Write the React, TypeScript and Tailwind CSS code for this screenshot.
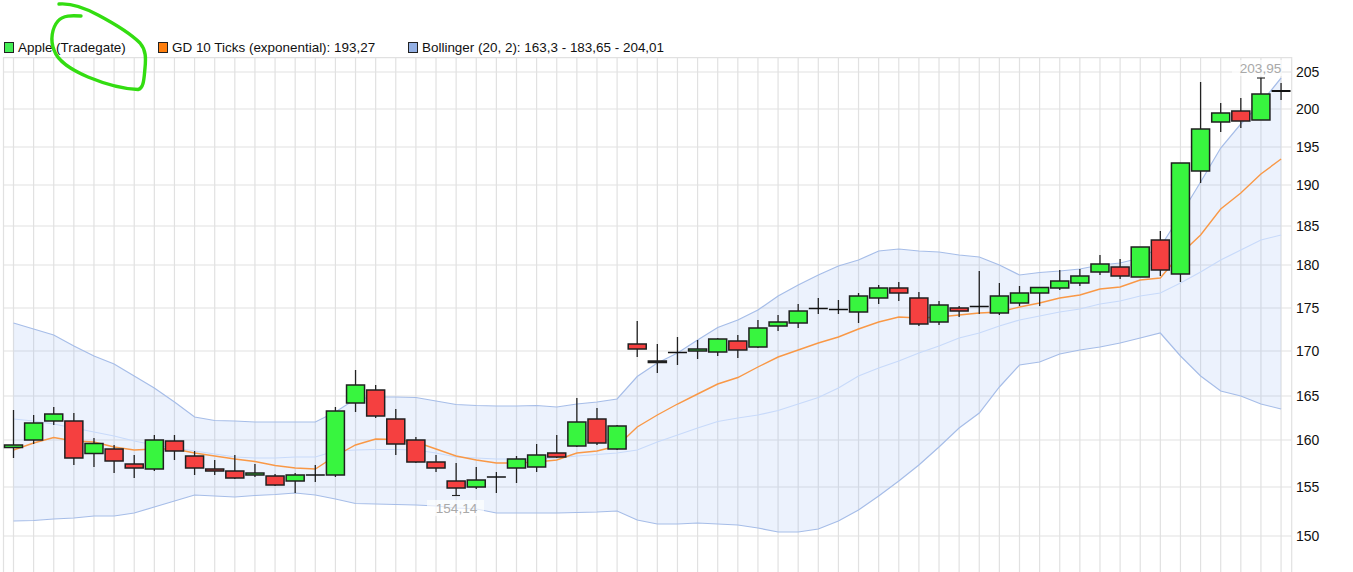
const upper = [323,329,335,346,356,364,376,388,402,417,420.5,421,422,422,422,422,412,399,397,397,397.5,401,404.5,405.5,406,406,405.5,407,404,402,399,376.5,363,353,340,327.5,320,310,296,285,275,266,260,251,249,251,252,255,257,265,275,272.5,271,269,265,263,258,247,215,182,148,124,103,78];
const lower = [521,520.5,519,518,516,516,513,507,501,495,496,497,495.5,494.5,493,495,499,503.5,504,504.5,505,506,508,509,513,513,513,513,512.5,512,511,520,524,524,523,524,525,528,532,532,529,521,510,496,481,465,447,428,413,387,365,362,354,350,347,343,338,333,356,376,391,396,404,409];
const middle = [419,421,424,428,432,436,441,445,448,451,454,457,458,458,457,457,451,450,449.5,449.5,450,453,457,458,459,459,459,458,456,454.5,453,450,442,435,428,421.5,418,415,410.5,404,397.5,388,376,368,361,353,346,338,333,326,320,316,312,309,304,301,296,293,283,272,260,250,240,235];
const orange = [450,443,437.5,441,442,447,450,449,449,453,456,459,461.5,465.5,468,469,456,445,439,439.5,442,449,456,460,463,463,462,460,453,451,446,427,415,404,394,384,377.5,367,357,350,343,337,329,322,317,318,317,315,313,312,307,303,298,295,289,287,280,278,254,235,209,193,174,159];

type C = [number, number, number, number, "g" | "r" | "d"];
const candles: C[] = [
  [410,458,445,447.5,"g"],[415,444,423,440,"g"],[407,425,414,421,"g"],[413,465,421,458,"r"],
  [438,467,443.5,453.5,"g"],[445,473,449,461,"r"],[455,478,464,468,"r"],[435,471,440,469,"g"],
  [435,460,441,451,"r"],[451,475,456,468,"r"],[460,475,469,471,"r"],[455,479,471,478,"r"],
  [464,477,473,475,"g"],[474,486,476,485,"r"],[473,493,475,481,"g"],[465,482,475,475,"d"],
  [407,477,411,475,"g"],[370,412,385,403,"g"],[385,418,390,416,"r"],[409,455,419,444,"r"],
  [437,463,440,462,"r"],[455,472,462,468,"r"],[463,495,481,488,"r"],[467,489,480,487,"g"],
  [472,493,477,477,"d"],[456,483,459,468,"g"],[444,472,455,467,"g"],[435,458,453,457,"r"],
  [398,447,422,446,"g"],[408,445,419,443,"r"],[425,450,426,449,"g"],[321,357,344,349,"r"],
  [344,373,361,362.5,"g"],[337,365,352.5,352.5,"d"],[340,359,349,351,"g"],[338,356,339,352,"g"],
  [335,358,341,350,"r"],[320,348,328,347,"g"],[315,331,322,326,"g"],[304,328,311,323,"g"],
  [298,314,308.5,308.5,"d"],[300,314,309.5,309.5,"d"],[293,323,296,312,"g"],[285,304,288,298,"g"],
  [282,301,288,293,"r"],[292,326,298,324,"r"],[301,325,305,322,"g"],[306,317,308,311,"r"],
  [271,314,306.5,306.5,"d"],[283,315,296,313,"g"],[286,306,293,303,"g"],[287,306,287.5,293,"g"],
  [270,290,281,288,"g"],[269,286,276,283,"g"],[255,275,264,272,"g"],[259,279,267,276,"r"],
  [247,277,247,277,"g"],[231,276,240,270,"r"],[163,282,163,274,"g"],[82,183,129,171,"g"],
  [103,132,113,122,"g"],[98,128,111,121,"r"],[78,120,94,120,"g"],[83,100,91,91,"d"],
];

const X = (i: number) => 13.5 + 20.12 * i;
const pts = (a: number[]) => a.map((y, i) => `${X(i).toFixed(1)},${y}`).join(" ");
const band = `${pts(upper)} ${lower.map((y, i) => `${X(i).toFixed(1)},${y}`).reverse().join(" ")}`;
const yTicks: [number, string][] = [[72,"205"],[109,"200"],[147,"195"],[185,"190"],[226,"185"],[265,"180"],[308,"175"],[351,"170"],[396,"165"],[440,"160"],[487,"155"],[536,"150"]];

function Legend({ color, label, className }: { color: string; label: string; className: string }) {
  return (
    <div className={`flex items-center gap-[4px] ${className}`}>
      <span className={`block w-[10.5px] h-[10.5px] border border-[#222222] ${color}`} />
      <span>{label}</span>
    </div>
  );
}

export default function App() {
  return (
    <div className="relative w-[1353px] h-[572px] overflow-hidden bg-white text-[13.45px] leading-[19px] text-[#111111] font-['Liberation_Sans',Arial,sans-serif]">
      <div className="flex items-center h-[19px] mt-[38px] pl-[3.5px]">
        <Legend color="bg-[#44ee55]" label="Apple (Tradegate)" className="w-[154px]" />
        <Legend color="bg-[#ff7f0e]" label="GD 10 Ticks (exponential): 193,27" className="w-[250px]" />
        <Legend color="bg-[#94b0e4]" label="Bollinger (20, 2): 163,3 - 183,65 - 204,01" className="" />
      </div>
      <svg width="1353" height="515" viewBox="0 57 1353 515" className="block">
        <g stroke="#e1e1e1" strokeWidth="1.2" fill="none">
          <line x1="3" x2="1292" y1="57.5" y2="57.5" strokeWidth="1.4" />
          {yTicks.map(([y]) => <line key={y} x1="3" x2="1292" y1={y} y2={y} />)}
          <line x1="3.5" x2="3.5" y1="57" y2="572" />
          <line x1="1291.7" x2="1291.7" y1="57" y2="572" />
          {upper.map((_, i) => <line key={i} x1={X(i)} x2={X(i)} y1="57" y2="572" />)}
        </g>
        <polygon points={band} fill="#8fb3f5" fillOpacity="0.17" />
        <polyline points={pts(upper)} fill="none" stroke="#a6bde8" strokeWidth="1.2" />
        <polyline points={pts(lower)} fill="none" stroke="#a6bde8" strokeWidth="1.2" />
        <polyline points={pts(middle)} fill="none" stroke="#c8dafa" strokeWidth="1.2" />
        <polyline points={pts(orange)} fill="none" stroke="#f99846" strokeWidth="1.4" />
        {candles.map(([wt, wb, bt, bb, c], i) => {
          const x = X(i);
          const last = i === candles.length - 1;
          return (
            <g key={i}>
              <line x1={x} x2={x} y1={wt} y2={wb} stroke="#222222" strokeWidth="1.3" />
              {c === "d" ? (
                <line x1={x - 9.5} x2={x + 9.5} y1={bt} y2={bt} stroke="#111111" strokeWidth={last ? 2 : 1.5} />
              ) : (
                <rect x={x - 9} y={bt} width="18" height={bb - bt} fill={c === "g" ? "#38f53f" : "#f54040"} stroke="#1f1f1f" strokeWidth="1.5" />
              )}
            </g>
          );
        })}
        <line x1="452" x2="460" y1="495.5" y2="495.5" stroke="#222222" strokeWidth="1.1" />
        <line x1="1257" x2="1265" y1="78" y2="78" stroke="#222222" strokeWidth="1.1" />
        <rect x="427" y="500" width="57" height="16" fill="#ffffff" fillOpacity="0.65" />
        <text x="456.5" y="513" textAnchor="middle" fontSize="13.6" fill="#a9a9a9">154,14</text>
        <rect x="1232" y="60" width="50" height="16" fill="#ffffff" fillOpacity="0.65" />
        <text x="1260.5" y="73" textAnchor="middle" fontSize="13.6" fill="#a9a9a9">203,95</text>
        {yTicks.map(([y, t]) => (
          <text key={t} x="1296" y={y + 5} fontSize="14" fill="#111111">{t}</text>
        ))}
      </svg>
      <svg width="160" height="100" viewBox="0 0 160 100" className="absolute left-0 top-0">
        <path d="M59 4 C70 3 85 8 98 15 C115 24 132 35 140 43 C146 50 146 58 145 68 C144 78 144 88 138 89.5 C125 89 105 84 88 77 C72 70 58 62 54 50 C50 40 52 28 58 21 C63 15 72 15.5 81 16" fill="none" stroke="#33dd11" strokeWidth="3.4" strokeLinecap="round" strokeLinejoin="round" />
      </svg>
    </div>
  );
}
